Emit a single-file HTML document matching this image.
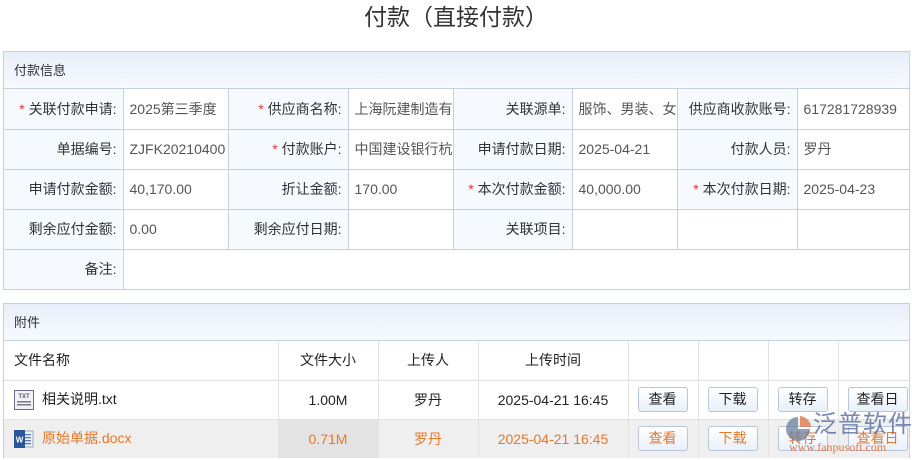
<!DOCTYPE html>
<html><head><meta charset="utf-8">
<style>
*{margin:0;padding:0;box-sizing:border-box}
body{width:912px;height:460px;background:#fff;font-family:"Liberation Sans","Noto Sans CJK SC",sans-serif;font-size:14px;color:#333;position:relative;overflow:hidden}
.title{position:absolute;left:0;top:2px;width:912px;text-align:center;font-size:23px;color:#333;line-height:30px}
.p{position:absolute;left:3px;width:907px;border:1px solid #c5d0e0}
.hd{background:linear-gradient(#e8eef9,#f7faff);height:37px;line-height:37px;padding-left:10px;border-bottom:1px solid #c5d0e0;color:#333;font-size:13px}
table{border-collapse:collapse;table-layout:fixed;width:905px}
.t1 td{height:40px;border:1px solid #c5d0e0;padding:0 6px;white-space:nowrap;overflow:hidden}
.t1 tr:first-child td{border-top:0}
.t1 td:first-child{border-left:0}.t1 td:last-child{border-right:0}
.t1 tr:last-child td{border-bottom:0}
.l{background:#f6f9fd;text-align:right;color:#333}
.v{color:#555}
.r{color:#e33}
.t2 td{height:39px;border:1px solid #e2e2e2;text-align:center;white-space:nowrap;overflow:hidden;color:#222}
.t2 tr:first-child td{border-top:0}
.t2 td:first-child{border-left:0;text-align:left;padding-left:10px}
.t2 td:last-child{border-right:0}
.t2 tr:last-child td{border-bottom:0}
.t2 tr.o td{background:#efefef;color:#e8772a}
.t2 tr.o td.g{background:#e3e3e3}
.b{display:inline-block;width:50px;height:25px;line-height:23px;border:1px solid #b9c6d8;border-radius:3px;background:linear-gradient(#fff,#e9f0fa);font-size:14px;text-align:center}
.t2 td.bc{text-align:left;padding-left:9px}
.ic{display:inline-block;vertical-align:middle;margin-right:8px}
</style></head><body>
<div class="title">付款（直接付款）</div>
<div class="p" style="top:51px">
<div class="hd">付款信息</div>
<table class="t1">
<colgroup><col style="width:119px"><col style="width:105px"><col style="width:120px"><col style="width:105px"><col style="width:119px"><col style="width:105px"><col style="width:120px"><col style="width:112px"></colgroup>
<tr><td class="l"><span class="r">* </span>关联付款申请:</td><td class="v">2025第三季度</td><td class="l"><span class="r">* </span>供应商名称:</td><td class="v">上海阮建制造有</td><td class="l">关联源单:</td><td class="v">服饰、男装、女</td><td class="l">供应商收款账号:</td><td class="v">617281728939</td></tr>
<tr><td class="l">单据编号:</td><td class="v">ZJFK20210400</td><td class="l"><span class="r">* </span>付款账户:</td><td class="v">中国建设银行杭</td><td class="l">申请付款日期:</td><td class="v">2025-04-21</td><td class="l">付款人员:</td><td class="v">罗丹</td></tr>
<tr><td class="l">申请付款金额:</td><td class="v">40,170.00</td><td class="l">折让金额:</td><td class="v">170.00</td><td class="l"><span class="r">* </span>本次付款金额:</td><td class="v">40,000.00</td><td class="l"><span class="r">* </span>本次付款日期:</td><td class="v">2025-04-23</td></tr>
<tr><td class="l">剩余应付金额:</td><td class="v">0.00</td><td class="l">剩余应付日期:</td><td class="v"></td><td class="l">关联项目:</td><td class="v"></td><td class="v"></td><td class="v"></td></tr>
<tr><td class="l">备注:</td><td colspan="7"></td></tr>
</table>
</div>
<div class="p" style="top:303px;height:155px">
<div class="hd">附件</div>
<table class="t2">
<colgroup><col style="width:274px"><col style="width:100px"><col style="width:100px"><col style="width:150px"><col style="width:70px"><col style="width:70px"><col style="width:70px"><col style="width:71px"></colgroup>
<tr><td>文件名称</td><td>文件大小</td><td>上传人</td><td>上传时间</td><td></td><td></td><td></td><td></td></tr>
<tr><td><svg class="ic" width="20" height="20" viewBox="0 0 20 20"><rect x="0.5" y="0.5" width="19" height="19" fill="#f2f2fa" stroke="#6b6b9a"/><text x="10" y="8" font-size="6" text-anchor="middle" fill="#556" font-family="Liberation Sans" font-weight="bold">TXT</text><rect x="3" y="11" width="14" height="1.5" fill="#778"/><rect x="3" y="14" width="14" height="1.5" fill="#778"/></svg>相关说明.txt</td><td>1.00M</td><td>罗丹</td><td>2025-04-21 16:45</td><td class="bc"><span class="b">查看</span></td><td class="bc"><span class="b">下载</span></td><td class="bc"><span class="b">转存</span></td><td class="bc"><span class="b" style="width:60px">查看日</span></td></tr>
<tr class="o"><td><svg class="ic" width="20" height="20" viewBox="0 0 20 20"><rect x="6" y="2" width="13" height="16" fill="#eef2f8" stroke="#9ab"/><rect x="9" y="5" width="8" height="1.3" fill="#5a7ab0"/><rect x="9" y="8" width="8" height="1.3" fill="#5a7ab0"/><rect x="9" y="11" width="8" height="1.3" fill="#5a7ab0"/><rect x="9" y="14" width="8" height="1.3" fill="#5a7ab0"/><rect x="0" y="1" width="11" height="18" fill="#2b579a"/><text x="5.5" y="13.5" font-size="8" text-anchor="middle" fill="#fff" font-family="Liberation Sans" font-weight="bold">W</text></svg>原始单据.docx</td><td class="g">0.71M</td><td>罗丹</td><td>2025-04-21 16:45</td><td class="bc"><span class="b">查看</span></td><td class="bc"><span class="b">下载</span></td><td class="bc"><span class="b">转存</span></td><td class="bc"><span class="b" style="width:60px">查看日</span></td></tr>
</table>
</div>
<div style="position:absolute;left:783px;top:410px;width:130px;height:46px;pointer-events:none;white-space:nowrap">
<svg width="30" height="30" viewBox="0 0 30 30" style="position:absolute;left:0;top:4px"><path d="M15 3 A12 12 0 1 0 27 15 L15 15 Z" fill="#6b7fa0" opacity="0.75"/><path d="M17 2 A12 12 0 0 1 28 13 L17 13 Z" fill="#e07a50" opacity="0.8"/></svg>
<div style="position:absolute;left:30px;top:0;font-size:24px;color:#5f74a6;opacity:0.85;letter-spacing:1px;line-height:30px;white-space:nowrap">泛普软件</div>
<div style="position:absolute;left:6px;top:30px;font-size:12px;color:#e0602a;font-family:'Liberation Serif',serif;opacity:0.85;white-space:nowrap">www.fanpusoft.com</div>
</div>
</body></html>
